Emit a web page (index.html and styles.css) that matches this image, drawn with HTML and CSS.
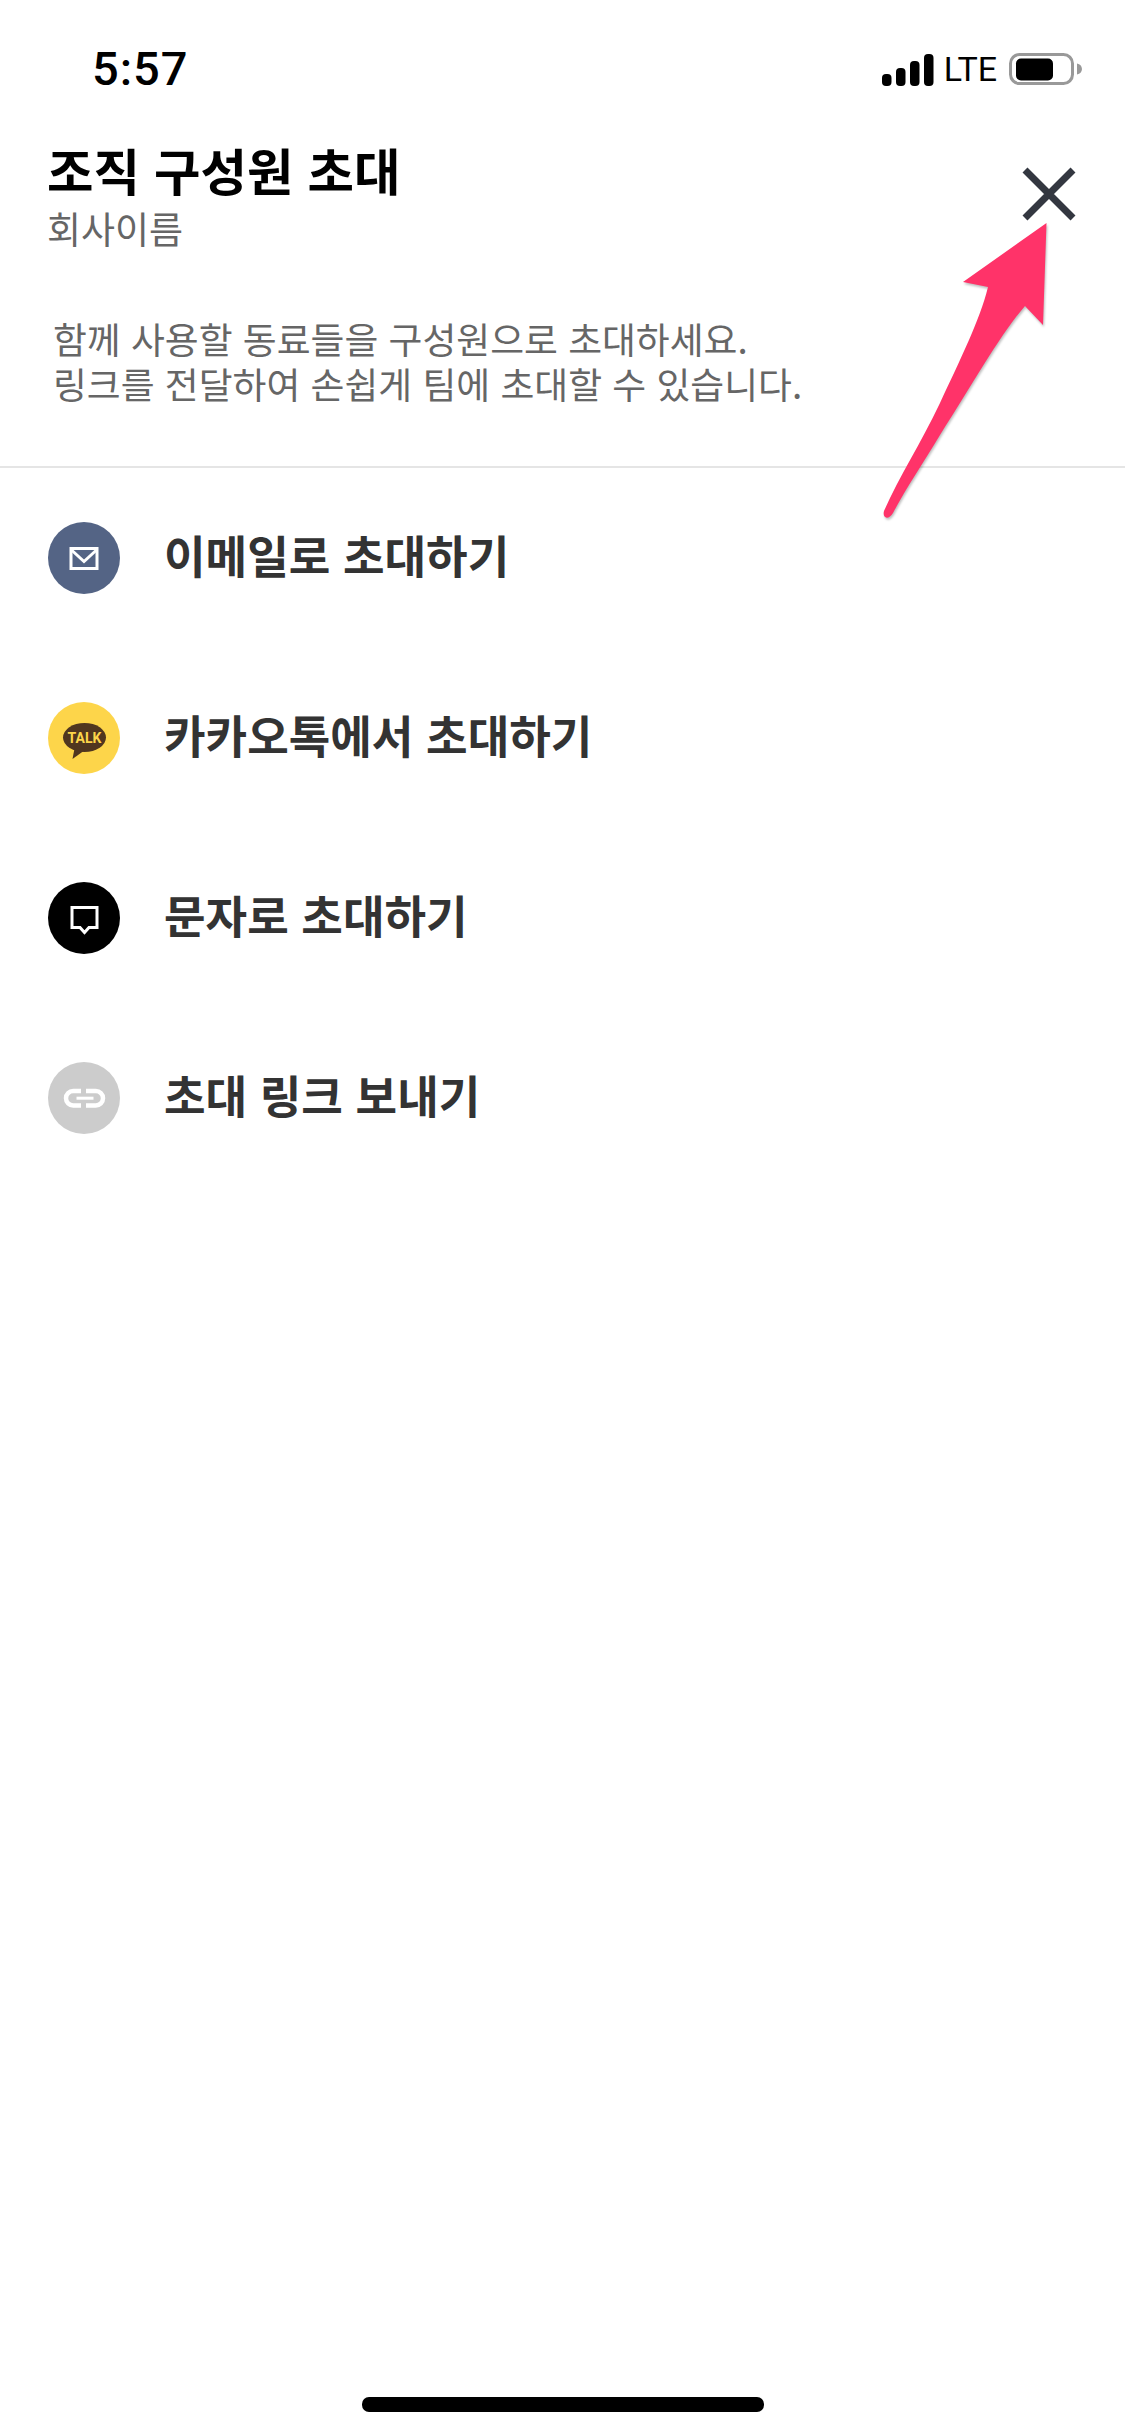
FILE: index.html
```html
<!DOCTYPE html>
<html lang="ko">
<head>
  <meta charset="UTF-8" />
  <meta name="viewport" content="width=device-width, initial-scale=1.0"/>
  <title>조직 구성원 초대</title>
  <link rel="stylesheet" href="styles.css">
</head>
<body>

  <!-- STATUS BAR -->
  <div class="status-bar">
    <div class="status-time">5:57</div>
    <div class="status-icons">
      <svg class="signal" width="52" height="33" viewBox="0 0 52 33">
        <rect x="0" y="21" width="9.5" height="12" rx="4"/>
        <rect x="14" y="15" width="9.5" height="18" rx="4"/>
        <rect x="28" y="8" width="9.5" height="25" rx="4"/>
        <rect x="42" y="1" width="9.5" height="32" rx="4"/>
      </svg>
      <span class="lte">LTE</span>
      <svg class="battery" width="74" height="33" viewBox="0 0 74 33">
        <rect x="1.5" y="1.5" width="62" height="29" rx="9" fill="none" stroke="#999" stroke-width="3"/>
        <rect x="7" y="5.5" width="37" height="22" rx="5" fill="#000"/>
        <path d="M68 10.500 a6 6 0 0 1 5 5.500 a6 6 0 0 1 -5 5.500 z" fill="#999"/>
      </svg>
    </div>
  </div>

  <!-- HEADER -->
  <div class="invite-header">
    <div class="header-text">
      <h1>조직 구성원 초대</h1>
      <p>회사이름</p>
    </div>
    <svg class="close-icon" width="54" height="54" viewBox="0 0 54 54">
      <path d="M3 3 L51 51 M51 3 L3 51" stroke="#333740" stroke-width="7" fill="none"/>
    </svg>
  </div>

  <p class="invite-desc">함께 사용할 동료들을 구성원으로 초대하세요.<br>링크를 전달하여 손쉽게 팀에 초대할 수 있습니다.</p>

  <!-- INVITE OPTIONS -->
  <div class="invite-list">
    <div class="invite-item">
      <div class="icon-circle mail">
        <svg width="72" height="72" viewBox="0 0 72 72">
          <rect x="23" y="26.5" width="26" height="20" fill="none" stroke="#fff" stroke-width="3"/>
          <path d="M23.5 28 L36 39.5 L48.5 28" fill="none" stroke="#fff" stroke-width="3"/>
        </svg>
      </div>
      <span class="item-label">이메일로 초대하기</span>
    </div>
    <div class="invite-item">
      <div class="icon-circle kakao">
        <svg width="72" height="72" viewBox="0 0 72 72">
          <ellipse cx="36.500" cy="35.500" rx="21.500" ry="14.500" fill="#50361f"/>
          <path d="M27 44 L24.500 57 L37 48 z" fill="#50361f"/>
          <text class="talk-text" x="36.500" y="41" text-anchor="middle">TALK</text>
        </svg>
      </div>
      <span class="item-label">카카오톡에서 초대하기</span>
    </div>
    <div class="invite-item">
      <div class="icon-circle sms">
        <svg width="72" height="72" viewBox="0 0 72 72">
          <path d="M24 25.500 H49 V45.500 H41 L36.500 50.500 L32 45.500 H24 Z" fill="none" stroke="#fff" stroke-width="3"/>
        </svg>
      </div>
      <span class="item-label">문자로 초대하기</span>
    </div>
    <div class="invite-item">
      <div class="icon-circle link">
        <svg width="72" height="72" viewBox="0 0 72 72">
          <path d="M33 29 H25.200 a7.200 7.200 0 0 0 0 14.400 H33 M38 29 H47.800 a7.200 7.200 0 0 1 0 14.400 H38" fill="none" stroke="#fff" stroke-width="4.500"/>
          <path d="M28.500 36.200 H45.500" stroke="#fff" stroke-width="3"/>
        </svg>
      </div>
      <span class="item-label">초대 링크 보내기</span>
    </div>
  </div>

  <!-- Annotation arrow over the page -->
  <svg class="arrow" width="1125" height="600" viewBox="0 0 1125 600">
    <path d="M1046.500 223 L1043 325 L1025 306 C1000 335 975 380 940 435 C925 460 905 490 893 513 C889 520 882 519 884 511 C900 475 920 445 940 403 C960 360 980 320 988 287 L963 282 Z" fill="#ff3369"/>
  </svg>

  <div class="home-indicator"></div>

</body>
</html>
```

FILE: styles.css
```css
* {
  margin: 0;
  padding: 0;
  box-sizing: border-box;
}

body {
  position: relative;
  width: 1125px;
  height: 2436px;
  display: flex;
  flex-direction: column;
  background: #fff;
  font-family: "Noto Sans CJK KR", "Noto Sans", sans-serif;
  overflow: hidden;
}

/* Status bar */
.status-bar {
  height: 100px;
  padding: 44px 42px 0 92px;
  display: flex;
  justify-content: space-between;
  align-items: flex-start;
}

.status-time {
  font-family: Roboto, sans-serif;
  font-weight: 500;
  font-size: 47px;
  line-height: 50px;
  letter-spacing: 1px;
  color: #000;
}

.status-icons {
  display: flex;
  align-items: center;
  padding-top: 8px;
}

.signal {
  fill: #000;
  margin-right: 10px;
}

.lte {
  font-family: Roboto, sans-serif;
  font-weight: 400;
  font-size: 34px;
  line-height: 34px;
  color: #000;
  margin-right: 12px;
}

/* Header */
.invite-header {
  padding: 39px 49px 0 47px;
  display: flex;
  justify-content: space-between;
  align-items: flex-start;
}

.invite-header h1 {
  font-size: 50.500px;
  font-weight: 700;
  line-height: 60px;
  color: #000;
}

.invite-header p {
  margin-top: 9px;
  font-size: 37px;
  font-weight: 400;
  line-height: 40px;
  color: #666;
}

.close-icon {
  margin-top: 28px;
}

.invite-desc {
  margin-top: 68px;
  padding: 0 0 60px 53px;
  font-size: 36.800px;
  font-weight: 400;
  line-height: 45px;
  color: #666;
  border-bottom: 2px solid #e5e5e5;
}

/* Invite options */
.invite-item {
  height: 180px;
  padding-left: 48px;
  display: flex;
  align-items: center;
  gap: 44px;
  font-size: 45.200px;
  font-weight: 700;
  color: #333;
}

.item-label {
  padding-bottom: 8px;
}

.icon-circle {
  width: 72px;
  height: 72px;
  border-radius: 50%;
  flex-shrink: 0;
}

.icon-circle svg {
  display: block;
}

.mail { background: #546485; }
.kakao { background: #fdd54a; }
.sms { background: #000; }
.link { background: #ccc; }

.talk-text {
  font-family: Roboto, sans-serif;
  font-size: 14px;
  font-weight: 700;
  fill: #fdd54a;
}

/* Overlays */
.arrow {
  position: absolute;
  top: 0;
  left: 0;
  filter: drop-shadow(1px 2px 1px rgba(0, 0, 0, 0.25));
}

.home-indicator {
  width: 402px;
  height: 15px;
  margin: auto auto 24px;
  border-radius: 7px;
  background: #000;
}
```
